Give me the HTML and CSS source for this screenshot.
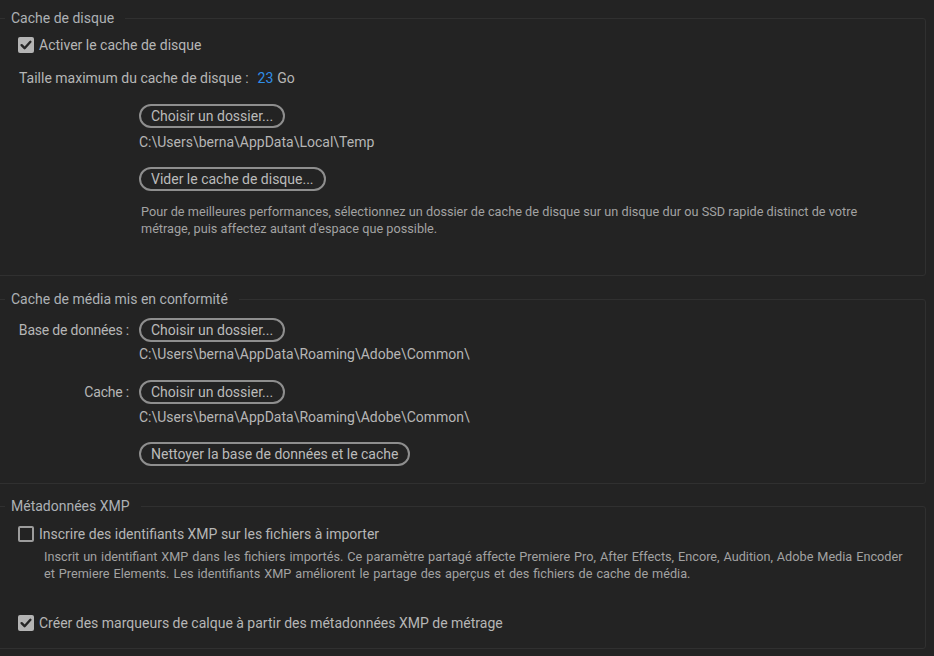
FILE: index.html
```html
<!DOCTYPE html>
<html lang="fr">
<head>
<meta charset="utf-8">
<link rel="stylesheet" href="styles.css">
</head>
<body>
<div class="panel">
  <fieldset class="group g1">
    <legend>Cache de disque</legend>
    <div class="check-row r-activate">
      <span class="cb checked"><svg viewBox="0 0 16 16" width="16" height="16"><path d="M3.6 8.2 L6.6 11.2 L12.4 4.8" fill="none" stroke="#262626" stroke-width="2.4" stroke-linecap="round" stroke-linejoin="round"/></svg></span>
      <span class="label">Activer le cache de disque</span>
    </div>
    <div class="size-row">
      <span class="label">Taille maximum du cache de disque :</span>
      <span class="value">23</span>
      <span class="label">Go</span>
    </div>
    <div class="col">
      <button class="pill b-choose1">Choisir un dossier...</button>
      <div class="path p1">C:\Users\berna\AppData\Local\Temp</div>
      <button class="pill b-empty">Vider le cache de disque...</button>
      <p class="desc d1">Pour de meilleures performances, sélectionnez un dossier de cache de disque sur un disque dur ou SSD rapide distinct de votre<br>métrage, puis affectez autant d'espace que possible.</p>
    </div>
  </fieldset>

  <fieldset class="group g2">
    <legend>Cache de média mis en conformité</legend>
    <div class="form-row fr1">
      <span class="row-label">Base de données :</span>
      <button class="pill">Choisir un dossier...</button>
    </div>
    <div class="path indent p2">C:\Users\berna\AppData\Roaming\Adobe\Common\</div>
    <div class="form-row fr2">
      <span class="row-label">Cache :</span>
      <button class="pill">Choisir un dossier...</button>
    </div>
    <div class="path indent p3">C:\Users\berna\AppData\Roaming\Adobe\Common\</div>
    <div class="indent b-clean-wrap">
      <button class="pill">Nettoyer la base de données et le cache</button>
    </div>
  </fieldset>

  <fieldset class="group g3">
    <legend>Métadonnées XMP</legend>
    <div class="check-row r-xmp">
      <span class="cb"></span>
      <span class="label">Inscrire des identifiants XMP sur les fichiers à importer</span>
    </div>
    <p class="desc d3">Inscrit un identifiant XMP dans les fichiers importés. Ce paramètre partagé affecte Premiere Pro, After Effects, Encore, Audition, Adobe Media Encoder<br>et Premiere Elements. Les identifiants XMP améliorent le partage des aperçus et des fichiers de cache de média.</p>
    <div class="check-row r-markers">
      <span class="cb checked"><svg viewBox="0 0 16 16" width="16" height="16"><path d="M3.6 8.2 L6.6 11.2 L12.4 4.8" fill="none" stroke="#262626" stroke-width="2.4" stroke-linecap="round" stroke-linejoin="round"/></svg></span>
      <span class="label">Créer des marqueurs de calque à partir des métadonnées XMP de métrage</span>
    </div>
  </fieldset>
</div>
</body>
</html>
```

FILE: styles.css
```css
html, body {
  margin: 0;
  padding: 0;
  background: #232323;
  height: 100%;
  overflow: hidden;
}

body {
  font-family: Roboto, "Liberation Sans", sans-serif;
  font-size: 14px;
  color: #b5b5b5;
}

.panel {
  padding-top: 9px;
  display: flex;
  flex-direction: column;
  gap: 13px;
}

.group {
  margin: 0 8px 0 -4px;
  padding: 0 0 0 20px;
  border: 1px solid #303030;
  border-radius: 3px;
  min-width: 0;
}

.g2 { margin-top: 1px; }

.group legend {
  margin-left: -12px;
  padding: 0 11px 0 6px;
  height: 18px;
  line-height: 18px;
  color: #adb1b5;
  font-size: 14px;
}

.label {
  line-height: 18px;
  color: #b6b6b6;
}

.check-row {
  display: flex;
  align-items: center;
  gap: 5px;
  height: 18px;
  margin-left: 1px;
}

.cb {
  width: 16px;
  height: 16px;
  box-sizing: border-box;
  border: 2px solid #9c9c9c;
  border-radius: 2px;
  display: inline-flex;
  align-items: center;
  justify-content: center;
  flex-shrink: 0;
}

.cb.checked {
  border: none;
  background: #b4b4b4;
}

.r-activate { margin-top: 9px; }

.size-row {
  margin-top: 15px;
  height: 18px;
  display: flex;
  align-items: center;
  margin-left: 2px;
}

.size-row .value {
  color: #2f8ee8;
  margin-left: 9px;
  margin-right: 4px;
  line-height: 18px;
}

.col {
  margin-left: 122px;
  display: flex;
  flex-direction: column;
  align-items: flex-start;
}

.pill {
  font-family: inherit;
  font-size: 14px;
  color: #bbbbbb;
  background: transparent;
  border: 2px solid #8e8e8e;
  border-radius: 12px;
  height: 24px;
  padding: 0 10px;
  line-height: 20px;
  margin: 0;
  cursor: pointer;
}

.b-choose1 { margin-top: 17px; }

.path {
  height: 18px;
  line-height: 18px;
  color: #b6b6b6;
}

.p1 { margin-top: 5px; }
.b-empty { margin-top: 16px; }

.desc {
  margin: 0;
  font-size: 12.7px;
  line-height: 17px;
  color: #a2a2a2;
  white-space: nowrap;
}

.d1 {
  margin-top: 12px;
  margin-left: 2px;
  margin-bottom: 38px;
  word-spacing: 0.1px;
}

.form-row {
  display: flex;
  align-items: center;
  height: 24px;
  margin-left: 2px;
}

.row-label {
  width: 110px;
  flex-shrink: 0;
  display: flex;
  justify-content: flex-end;
  white-space: nowrap;
  margin-right: 10px;
  color: #b6b6b6;
  line-height: 18px;
  letter-spacing: -0.2px;
}

.fr1 { margin-top: 10px; }
.p2 { margin-top: 3px; }
.fr2 { margin-top: 17px; }
.p3 { margin-top: 4px; }

.indent { margin-left: 122px; }

.b-clean-wrap {
  margin-top: 16px;
  margin-bottom: 17px;
  height: 24px;
}

.r-xmp { margin-top: 10px; }

.d3 {
  margin-top: 5px;
  margin-left: 27px;
  word-spacing: 0.8px;
}

.r-markers {
  margin-top: 32px;
  margin-bottom: 16px;
}
```
